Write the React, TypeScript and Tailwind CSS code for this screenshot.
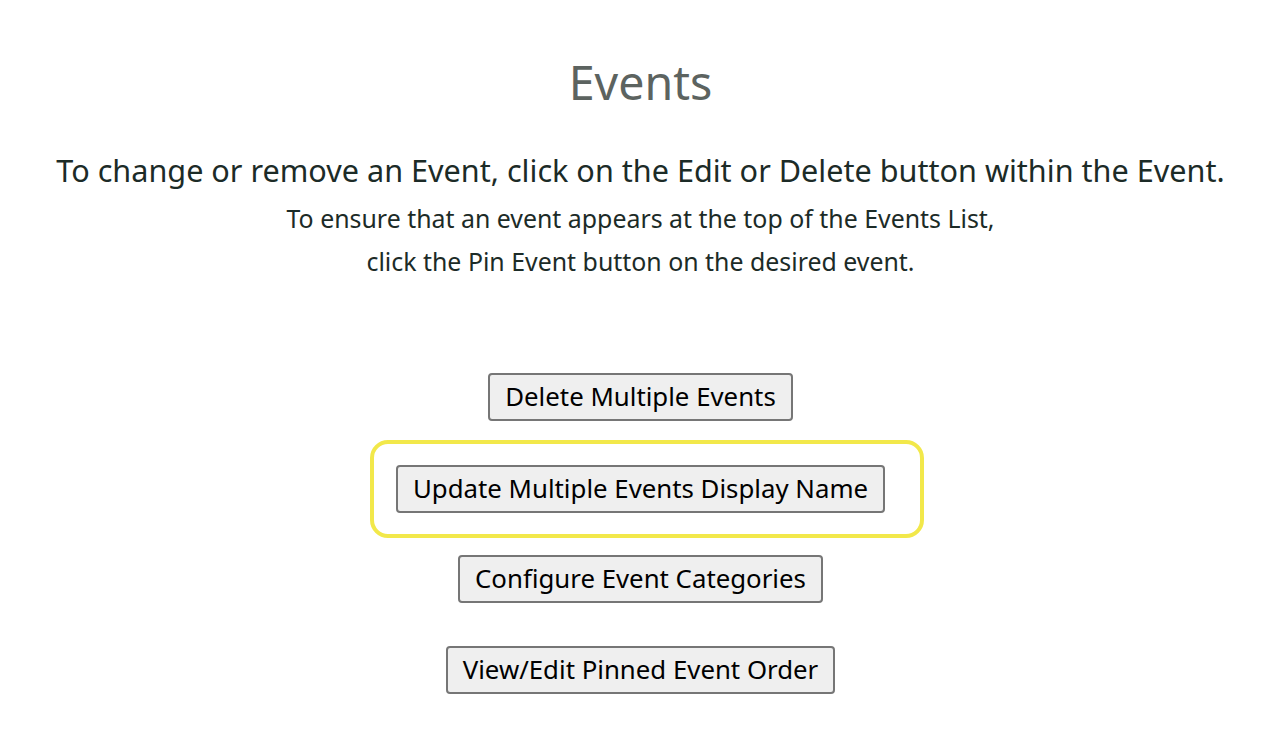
export default function App() {
  const font = { fontFamily: '"Noto Sans", "Open Sans", sans-serif' };
  const btn =
    "h-[48px] px-[15px] border-2 border-[#767676] rounded-[4px] bg-[#efefef] text-black text-[25.8px] leading-none whitespace-nowrap";

  return (
    <div className="min-h-[750px] bg-white flex flex-col items-center pl-[11px]" style={font}>
      <h1 className="mt-[54px] text-[46.5px] leading-[56px] text-[#5c6360]">Events</h1>

      <p className="mt-[40px] text-[30.6px] leading-[40px] text-[#1c2b27] whitespace-nowrap">
        To change or remove an Event, click on the Edit or Delete button within the Event.
      </p>
      <p className="mt-[12px] text-[24.9px] leading-[32px] text-[#1c2b27]">
        To ensure that an event appears at the top of the Events List,
      </p>
      <p className="mt-[11px] text-[24.9px] leading-[32px] text-[#1c2b27]">
        click the Pin Event button on the desired event.
      </p>

      <div className="mt-[96px] flex flex-col items-center">
        <button className={btn}>Delete Multiple Events</button>

        <div className="mt-[19px] ml-[12px] w-[554px] h-[98px] border-4 border-[#f2e84a] rounded-[18px] flex items-center justify-center pr-[12px]">
          <button className={btn}>Update Multiple Events Display Name</button>
        </div>

        <button className={`${btn} mt-[17px]`}>Configure Event Categories</button>
        <button className={`${btn} mt-[43px]`}>View/Edit Pinned Event Order</button>
      </div>
    </div>
  );
}
